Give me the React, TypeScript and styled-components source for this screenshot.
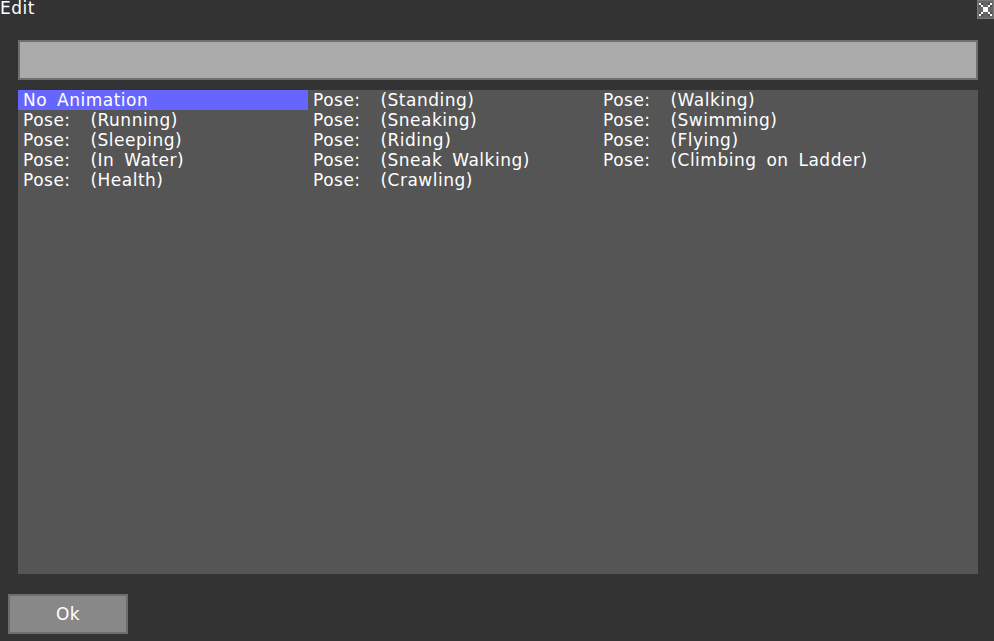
import React from "react";
import styled, { createGlobalStyle } from "styled-components";

const Global = createGlobalStyle`
  html, body {
    margin: 0;
    padding: 0;
    background: #333333;
  }
  body {
    font-family: "DejaVu Sans", "Liberation Sans", sans-serif;
    color: #ffffff;
  }
`;

const Screen = styled.div`
  width: 994px;
  height: 641px;
  display: flex;
  flex-direction: column;
  background: #333333;
  overflow: hidden;
`;

const TitleBar = styled.div`
  height: 20px;
  display: flex;
  align-items: flex-start;
  justify-content: space-between;
`;

const Title = styled.div`
  font-size: 17px;
  line-height: 16px;
  letter-spacing: 0.5px;
  color: #ffffff;
`;

const CloseButton = styled.button`
  width: 17px;
  height: 19px;
  padding: 0;
  border: 1px solid #7a7a7a;
  background: #666666;
  display: flex;
  align-items: center;
  justify-content: center;
  cursor: pointer;
`;

const Body = styled.div`
  display: flex;
  flex-direction: column;
  padding: 20px 16px 0 18px;
  gap: 10px;
`;

const SearchField = styled.input`
  box-sizing: border-box;
  width: 960px;
  height: 40px;
  border: 2px solid #6e6e6e;
  background: #aaaaaa;
  outline: none;
  font: inherit;
  padding: 0 6px;
`;

const List = styled.div`
  width: 960px;
  height: 484px;
  background: #555555;
  display: grid;
  grid-template-columns: repeat(3, 290px);
  grid-auto-rows: 20px;
  align-content: start;
`;

const Row = styled.div<{ $selected?: boolean }>`
  background: ${(p) => (p.$selected ? "#6666ff" : "transparent")};
  color: #ffffff;
  font-size: 17px;
  line-height: 20px;
  letter-spacing: 0.5px;
  word-spacing: 4px;
  padding-left: 5px;
  white-space: pre;
`;

const Footer = styled.div`
  padding: 20px 0 0 8px;
`;

const OkButton = styled.button`
  box-sizing: border-box;
  width: 120px;
  height: 40px;
  border: 2px solid #6e6e6e;
  background: #888888;
  color: #ffffff;
  font-family: inherit;
  font-size: 17px;
  letter-spacing: 0.5px;
  cursor: pointer;
`;

const CloseGlyph = () => (
  <svg width="13" height="13" viewBox="0 0 12 12" shapeRendering="crispEdges">
    {[
      [0, 0], [2, 2], [4, 4], [6, 6], [8, 8], [10, 10],
      [10, 0], [8, 2], [6, 4], [4, 6], [2, 8], [0, 10],
    ].map(([x, y], i) => (
      <rect key={i} x={x} y={y} width="2" height="2" fill="#ffffff" />
    ))}
    {[
      [2, 0], [0, 2], [8, 0], [10, 2], [0, 8], [2, 10], [10, 8], [8, 10],
    ].map(([x, y], i) => (
      <rect key={`d${i}`} x={x} y={y} width="2" height="2" fill="#3a3a3a" opacity="0.6" />
    ))}
  </svg>
);

const entries = [
  "No Animation",
  "Pose:  (Standing)",
  "Pose:  (Walking)",
  "Pose:  (Running)",
  "Pose:  (Sneaking)",
  "Pose:  (Swimming)",
  "Pose:  (Sleeping)",
  "Pose:  (Riding)",
  "Pose:  (Flying)",
  "Pose:  (In Water)",
  "Pose:  (Sneak Walking)",
  "Pose:  (Climbing on Ladder)",
  "Pose:  (Health)",
  "Pose:  (Crawling)",
];

export default function App() {
  const [selected, setSelected] = React.useState(0);
  return (
    <Screen>
      <Global />
      <TitleBar>
        <Title>Edit</Title>
        <CloseButton aria-label="Close">
          <CloseGlyph />
        </CloseButton>
      </TitleBar>
      <Body>
        <SearchField />
        <List>
          {entries.map((label, i) => (
            <Row key={label} $selected={i === selected} onClick={() => setSelected(i)}>
              {label}
            </Row>
          ))}
        </List>
      </Body>
      <Footer>
        <OkButton>Ok</OkButton>
      </Footer>
    </Screen>
  );
}
